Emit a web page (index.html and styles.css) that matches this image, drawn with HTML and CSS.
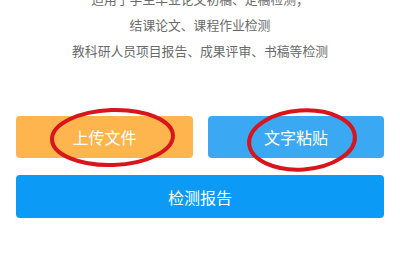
FILE: index.html
```html
<!DOCTYPE html>
<html lang="zh">
<head>
<meta charset="utf-8">
<link rel="stylesheet" href="styles.css">
</head>
<body>
<div class="page">
  <div class="intro">
    <p>适用于学生毕业论文初稿、定稿检测；</p>
    <p>结课论文、课程作业检测</p>
    <p>教科研人员项目报告、成果评审、书稿等检测</p>
  </div>
  <div class="actions">
    <div class="row">
      <button class="btn btn-upload">上传文件</button>
      <button class="btn btn-paste">文字粘贴</button>
    </div>
    <button class="btn btn-report">检测报告</button>
  </div>
  <svg class="marks" width="400" height="260" viewBox="0 0 400 260">
    <ellipse cx="112.5" cy="137.5" rx="60.5" ry="27.5" transform="rotate(-2 112.5 137.5)"/>
    <ellipse cx="302" cy="140" rx="53" ry="29.5" transform="rotate(-4 302 140)"/>
  </svg>
</div>
</body>
</html>
```
FILE: styles.css
```css
html, body {
  margin: 0;
  padding: 0;
  background: #ffffff;
}
.page {
  position: relative;
  width: 400px;
  height: 260px;
  overflow: hidden;
  font-family: "Noto Sans CJK SC", "Noto Sans", sans-serif;
}
.intro {
  margin-top: -14px;
  text-align: center;
  color: #6a6a6a;
  font-size: 12.8px;
}
.intro p {
  margin: 0;
  line-height: 26px;
}
.actions {
  margin-top: 52px;
  padding: 0 16px;
  display: flex;
  flex-direction: column;
  gap: 17px;
}
.row {
  display: flex;
  justify-content: space-between;
}
.btn {
  border: none;
  border-radius: 4px;
  color: #ffffff;
  font-family: "Noto Sans CJK SC", "Noto Sans", sans-serif;
  font-size: 16px;
  padding: 0;
  margin: 0;
}
.btn-upload {
  width: 177px;
  height: 42px;
  background: #ffb54d;
}
.btn-paste {
  width: 176px;
  height: 42px;
  background: #3aa8f3;
}
.btn-report {
  width: 368px;
  height: 43px;
  background: #0b9bf7;
}
.marks {
  position: absolute;
  left: 0;
  top: 0;
  pointer-events: none;
}
.marks ellipse {
  fill: none;
  stroke: #d8141c;
  stroke-width: 4;
}
```
